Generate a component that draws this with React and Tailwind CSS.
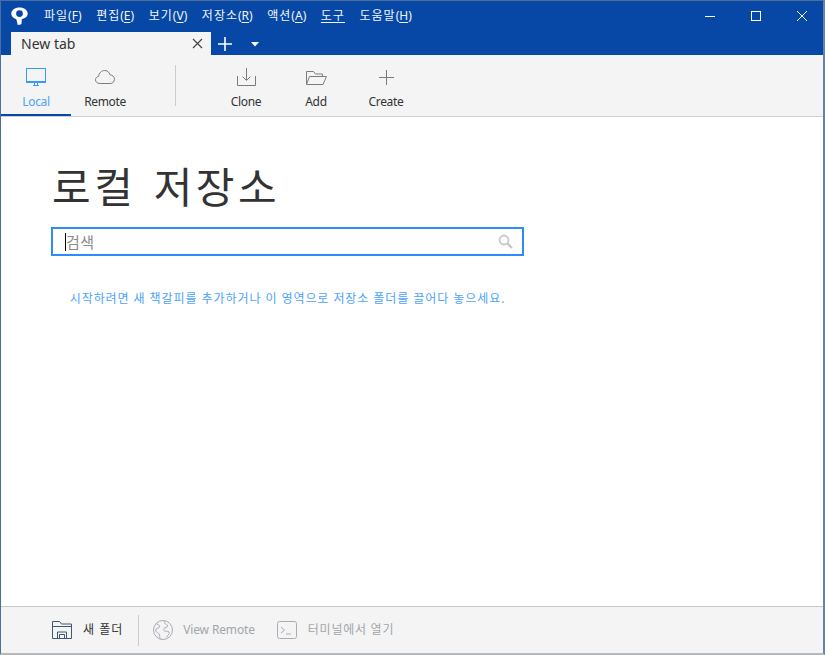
const KR = { fontFamily: '"Noto Sans","Noto Sans CJK KR",sans-serif' };

function Menu({ label, k }) {
  return (
    <span className="whitespace-nowrap">
      <span className="tracking-[1px]">{label}</span>(<span className="underline underline-offset-2">{k}</span>)
    </span>
  );
}

function ToolButton({ icon, label, className = "", textClass = "text-[#333]" }) {
  return (
    <div className={`flex flex-col items-center ${className}`}>
      <div className="h-[24px] flex items-center justify-center">{icon}</div>
      <div className={`mt-[5px] text-[12px] leading-[16px] tracking-[-0.35px] ${textClass}`}>{label}</div>
    </div>
  );
}

export default function App() {
  return (
    <div className="w-[825px] h-[655px] flex flex-col bg-white border-l border-r-2 border-b-2 border-l-[#4d6f9c] border-r-[#6483a6] border-b-[#b5b8bc] overflow-hidden" style={KR}>
      <div className="h-[55px] shrink-0 bg-[#0748a6] border-t border-[#4d6f9c] flex flex-col">
        <div className="h-[30px] flex items-center relative text-white">
          <svg className="ml-[10px] mt-[2px]" width="17" height="20" viewBox="0 0 17 20">
            <path fillRule="evenodd" fill="#fff" d="M8.500 0.500C3.900 0.500 0.300 3 0.300 6.800c0 2.600 1.900 4.400 5 5.400l1.500 5.800c1.300 0 2.600-0.300 3.700-0.900l0.300-4.900c3.400-0.800 5.900-2.700 5.900-5.400C16.700 3 13.100 0.500 8.500 0.500zM8.500 3.200a3.400 3.400 0 1 1 0 6.800a3.400 3.400 0 0 1 0-6.800z" />
          </svg>
          <div className="ml-[16px] flex gap-[14.6px] text-[12px] leading-[16px] text-[#f2f5fa]">
            <Menu label="파일" k="F" />
            <Menu label="편집" k="E" />
            <Menu label="보기" k="V" />
            <Menu label="저장소" k="R" />
            <Menu label="액션" k="A" />
            <span className="underline underline-offset-2 tracking-[1px]">도구</span>
            <Menu label="도움말" k="H" />
          </div>
          <div className="ml-auto flex items-center">
            <svg className="mr-[36px]" width="10" height="10" viewBox="0 0 10 10"><path d="M0 5.500h10" stroke="#fff" /></svg>
            <svg className="mr-[36px]" width="10" height="10" viewBox="0 0 10 10"><rect x="0.500" y="0.500" width="9" height="9" fill="none" stroke="#fff" /></svg>
            <svg className="mr-[16px]" width="10" height="10" viewBox="0 0 10 10"><path d="M0 0l10 10M10 0L0 10" stroke="#fff" /></svg>
          </div>
        </div>
        <div className="h-[24px] flex items-end text-white">
          <div className="ml-[10px] w-[200px] h-[23px] bg-[#f4f4f4] flex items-center justify-between pl-[10px] pr-[8px]">
            <span className="text-[14px] text-[#333] leading-[18px]">New tab</span>
            <svg width="11" height="11" viewBox="0 0 11 11"><path d="M1 1l9 9M10 1l-9 9" stroke="#444" strokeWidth="1.200" /></svg>
          </div>
          <svg className="ml-[7px] mb-[4px]" width="14" height="14" viewBox="0 0 14 14"><path d="M7 0v14M0 7h14" stroke="#fff" strokeWidth="1.600" /></svg>
          <svg className="ml-[19px] mb-[8px]" width="8" height="5" viewBox="0 0 8 5"><path d="M0 0h8L4 4.500z" fill="#fff" /></svg>
        </div>
      </div>

      <div className="h-[62px] shrink-0 bg-[#f4f4f4] border-b border-[#cfcfcf] flex">
        <div className="w-[70px] h-[61px] border-b-2 border-[#0748a6] pt-[10px]">
          <ToolButton
            textClass="text-[#4ba3fc]"
            label="Local"
            icon={
              <svg width="21" height="19" viewBox="0 0 21 19" fill="none" stroke="#3b99fc">
                <rect x="0.500" y="0.500" width="19" height="13" />
                <path d="M0 14.500h20M7 17.500h6M8.500 15v2M11.500 15v2" />
              </svg>
            }
          />
        </div>
        <div className="w-[68px] pt-[10px]">
          <ToolButton
            label="Remote"
            icon={
              <svg width="20" height="15" viewBox="0 0 20 15" fill="none" stroke="#7c7c7c">
                <path d="M5 13.500C2.400 13.500 0.500 12 0.500 9.800c0-1.900 1.200-3 3-3.300C4 3 6.500 0.500 9.600 0.500c2.700 0 4.700 1.700 5.400 4.300 2.500 0.200 4.500 2 4.500 4.400 0 2.500-1.900 4.300-4.500 4.300z" />
              </svg>
            }
          />
        </div>
        <div className="mt-[10px] ml-[36px] w-px h-[41px] bg-[#cccccc]" />
        <div className="ml-[35px] w-[70px] pt-[10px]">
          <ToolButton
            label="Clone"
            icon={
              <svg width="19" height="18" viewBox="0 0 19 18" fill="none" stroke="#7c7c7c">
                <path d="M0.500 8v9.500h18V8" />
                <path d="M9.500 0v12M5.500 8.500l4 4 4-4" />
              </svg>
            }
          />
        </div>
        <div className="w-[70px] pt-[10px]">
          <ToolButton
            label="Add"
            icon={
              <svg width="21" height="15" viewBox="0 0 21 15" fill="none" stroke="#7c7c7c">
                <path d="M0.500 14V1.500h7l2 2.500h7v2.500" />
                <path d="M0.500 14.500l3-8h17l-3.500 8z" />
              </svg>
            }
          />
        </div>
        <div className="w-[70px] pt-[10px]">
          <ToolButton
            label="Create"
            icon={
              <svg width="15" height="15" viewBox="0 0 15 15" stroke="#7c7c7c">
                <path d="M7.500 0v15M0 7.500h15" />
              </svg>
            }
          />
        </div>
      </div>

      <div className="flex-1 bg-white pl-[50px] pr-[300px]">
        <h1 className="mt-[42px] ml-px text-[42px] leading-[56px] font-normal text-[#333] tracking-[3.5px] [word-spacing:3px] whitespace-nowrap">로컬 저장소</h1>
        <div className="mt-[12px] h-[29px] w-[473px] border-2 border-[#2b8dfb] flex items-center pl-[12px] pr-[9px]">
          <div className="w-px h-[18px] bg-black" />
          <span className="text-[15px] leading-[18px] text-[#8a8a8a] tracking-[0.5px]">검색</span>
          <svg className="ml-auto" width="15" height="15" viewBox="0 0 15 15" fill="none" stroke="#c8c8c8">
            <circle cx="6" cy="6" r="4.500" strokeWidth="1.800" />
            <path d="M9.500 9.500l4.500 4.500" strokeWidth="2.400" />
          </svg>
        </div>
        <p className="mt-[35px] w-[473px] text-center text-[12px] leading-[16px] text-[#4ba3fc] tracking-[0.93px] whitespace-nowrap">
          시작하려면 새 책갈피를 추가하거나 이 영역으로 저장소 폴더를 끌어다 놓으세요.
        </p>
      </div>

      <div className="h-[47px] shrink-0 bg-[#f4f4f4] border-t border-[#c4c8cc] flex items-center text-[12px] leading-[16px]">
        <svg className="ml-[51px]" width="20" height="18" viewBox="0 0 20 18" fill="none" stroke="#3f5877">
          <path d="M0.500 17.500V0.500h7l2 2.500h10v14.500z" />
          <path d="M1 5.500h18" />
          <path d="M5.500 17v-6h9v6M7.500 17v-3.500h5V17" />
        </svg>
        <span className="ml-[11px] text-[#333] tracking-[1px]">새 폴더</span>
        <div className="ml-[15px] w-px h-[31px] bg-[#cccccc]" />
        <svg className="ml-[14px]" width="20" height="20" viewBox="0 0 20 20" fill="none" stroke="#a9adb3">
          <circle cx="10" cy="10" r="9.500" />
          <path d="M3 3.500c1.500 1 3 1 3.500 2.500s-1 2-2.500 2.500S2 11 3.500 12s2.500 1 3 3 0 3 1 4.500M12 1c-1 2 0 3 1.500 3.500S15 7 13 7.500s-3 1.500-2 3 4 0 5 1.500-1 3-2.500 5.500" />
        </svg>
        <span className="ml-[10px] text-[#a2a6ab] tracking-[-0.15px]">View Remote</span>
        <svg className="ml-[22px]" width="20" height="18" viewBox="0 0 20 18" fill="none" stroke="#a9adb3">
          <rect x="0.500" y="0.500" width="19" height="17" rx="2" />
          <path d="M4 6l3.500 3L4 12M9 13h5" />
        </svg>
        <span className="ml-[11px] text-[#a2a6ab] tracking-[0.75px]">터미널에서 열기</span>
      </div>
    </div>
  );
}
